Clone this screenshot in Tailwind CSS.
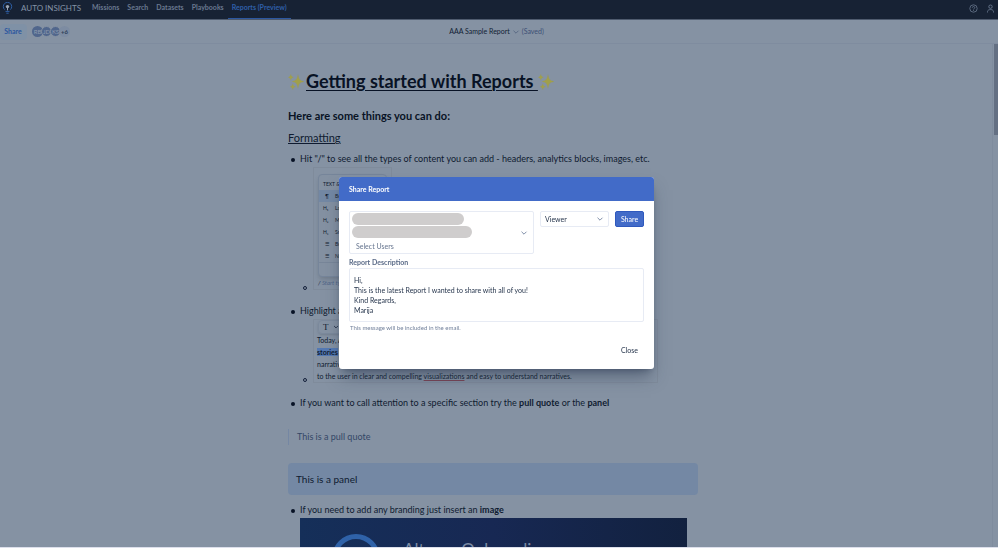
<!DOCTYPE html>
<html lang="en">
<head>
<meta charset="utf-8">
<meta name="viewport" content="width=device-width, initial-scale=1">
<title>AAA Sample Report - Auto Insights</title>
<script src="https://cdn.jsdelivr.net/npm/@tailwindcss/browser@4"></script>
</head>
<body class="flex h-screen flex-col overflow-hidden border-b border-[#dcdfeb] bg-[#8592a3] font-['Lato','Open_Sans',sans-serif] text-[7px] text-[#121e33]">

<svg class="hidden" aria-hidden="true">
  <symbol id="sparkles" viewBox="0 0 16 16">
    <path d="M10 .8C10.900 5.400 11.700 6.500 16 7.500 11.700 8.500 10.900 9.600 10 14.200 9.100 9.600 8.300 8.500 4 7.500 8.300 6.500 9.100 5.400 10 .8ZM2.800 .3C3.300 2.400 3.700 2.800 5.400 3.300 3.700 3.800 3.300 4.200 2.800 6.300 2.300 4.200 1.900 3.800.2 3.300 1.900 2.800 2.300 2.400 2.800.3ZM4.800 9.700C5.300 11.800 5.700 12.200 7.400 12.700 5.700 13.200 5.300 13.600 4.800 15.700 4.300 13.600 3.900 13.200 2.200 12.700 3.900 12.200 4.300 11.800 4.800 9.700Z" fill="#a09f4b" stroke="#a09f4b" stroke-width=".2"/>
  </symbol>
  <symbol id="chevron" viewBox="0 0 8 8">
    <path d="M1.800 3 4 5.200 6.200 3" fill="none" stroke="currentColor" stroke-width="1" stroke-linecap="round" stroke-linejoin="round"/>
  </symbol>
</svg>

<header class="flex h-5 shrink-0 items-stretch border-b border-[#4f5b6e] bg-[#172234] text-[#69788f]">
  <a href="#" class="flex items-center gap-2 pb-[3px] pl-[2px] text-[#8492a6]">
    <svg class="h-3 w-[11px]" viewBox="0 0 11 12" fill="none" aria-hidden="true">
      <path d="M2.600 7.600A4.200 4.200 0 1 1 8.400 7.600" stroke="#2d5fa5" stroke-width="1"/>
      <circle cx="5.500" cy="4.600" r="1.700" fill="#9aa6b6"/>
      <path d="M5.500 5v3.400" stroke="#9aa6b6" stroke-width="1"/>
      <path d="M3.500 9.400h4M4.300 11.200h2.400" stroke="#2d5fa5" stroke-width="1"/>
    </svg>
    <span class="text-[8px] leading-none">AUTO INSIGHTS</span>
  </a>
  <nav class="flex pl-[7px] font-bold">
    <a href="#" class="flex items-center px-1 pb-1">Missions</a>
    <a href="#" class="flex items-center px-1 pb-1">Search</a>
    <a href="#" class="flex items-center px-1 pb-1">Datasets</a>
    <a href="#" class="flex items-center px-1 pb-1">Playbooks</a>
    <a href="#" class="flex items-center border-b border-[#2c57a0] px-1 pb-[3px] text-[#2f5fa8]" aria-current="page">Reports (Preview)</a>
  </nav>
  <div class="ml-auto flex items-center gap-2 pr-[3px] pb-[3px]">
    <button type="button" aria-label="Help">
      <svg class="size-[9px]" viewBox="0 0 9 9" fill="none" stroke="currentColor" stroke-width=".8"><circle cx="4.500" cy="4.500" r="3.700"/><path d="M3.300 3.700c0-1.600 2.500-1.600 2.500 0 0 .9-1.300.8-1.300 1.800M4.500 6.200v.8"/></svg>
    </button>
    <button type="button" aria-label="Account">
      <svg class="size-[9px]" viewBox="0 0 9 9" fill="none" stroke="currentColor" stroke-width=".9"><circle cx="4.500" cy="2.700" r="1.700"/><path d="M1.500 8.500V7.600c0-2.700 6-2.700 6 0v.9"/></svg>
    </button>
  </div>
</header>

<div class="grid h-6 shrink-0 grid-cols-[1fr_auto_1fr] items-center border-b border-[#7f8c9f] pr-[5px]">
  <div class="flex items-center gap-[5px]">
    <button type="button" class="h-4 w-[27px] rounded-sm bg-[#7f91a6] pr-px font-bold text-[#2b569f]">Share</button>
    <div class="flex items-center text-[6px] text-[#8e9bae]">
      <span class="flex size-[11px] items-center justify-center rounded-full bg-[#50668c]">RB</span>
      <span class="-ml-[2px] flex size-[11px] items-center justify-center rounded-full border border-[#8592a3] bg-[#50668c]">JD</span>
      <span class="-ml-[2px] flex size-[11px] items-center justify-center rounded-full border border-[#8592a3] bg-[#50668c]">KS</span>
      <span class="-ml-[2px] flex size-[11px] items-center justify-center rounded-full bg-[#7d8ca2] font-bold text-[#2f3f5a]">+6</span>
    </div>
  </div>
  <div class="flex items-center gap-[2px]">
    <button type="button" class="flex items-center gap-[2px]">AAA Sample Report
      <svg class="size-2 text-[#5b6b85]" aria-hidden="true"><use href="#chevron"/></svg>
    </button>
    <span class="text-[#3d5075]">(Saved)</span>
  </div>
</div>

<div class="flex min-h-0 flex-1">
  <main class="min-w-0 flex-1 overflow-hidden border-r border-[#7f8c9e] pr-[6px]">
    <article class="mx-auto w-[410px] max-w-full pt-[25px] text-[9px] leading-4 text-[#0f1b30]">
      <h1 class="flex items-center text-[18px] leading-6 font-bold text-[#081225]">
        <svg class="mt-[2px] mr-[2px] size-4" role="img" aria-label="Sparkles"><use href="#sparkles"/></svg>
        <span class="whitespace-pre underline decoration-[1px] underline-offset-2">Getting started with Reports </span>
        <svg class="mt-[2px] size-4" role="img" aria-label="Sparkles"><use href="#sparkles"/></svg>
      </h1>
      <h2 class="mt-[15px] text-[11px] font-bold text-[#081225]">Here are some things you can do:</h2>
      <h3 class="mt-[6px] text-[11px] underline underline-offset-1">Formatting</h3>

      <ul class="mt-[5px] pl-3">
        <li class="before:float-left before:mt-[7px] before:-ml-[9px] before:size-1 before:rounded-full before:bg-[#081225] before:content-['']">Hit "/" to see all the types of content you can add - headers, analytics blocks, images, etc.
          <ul class="pl-[3px]">
            <li class="flex items-end gap-[6px] before:size-1 before:shrink-0 before:rounded-full before:border before:border-[#14203a] before:content-['']">
              <figure class="h-[123px] w-[79px] overflow-hidden border border-[#7f8b9b] px-1 pt-[6px] text-[5px] leading-3">
                <div class="h-[103px] overflow-hidden rounded-sm border border-[#76859a] bg-[#8491a2] pt-[3px] shadow-md">
                  <p class="truncate px-1">TEXT &amp; LAYOUT</p>
                  <p class="flex gap-1 bg-[#7388a4] px-1"><span class="w-2 text-center">¶</span>Body</p>
                  <p class="flex gap-1 px-1"><span class="w-2">H₁</span>Large</p>
                  <p class="flex gap-1 px-1"><span class="w-2">H₂</span>Medium</p>
                  <p class="flex gap-1 px-1"><span class="w-2">H₃</span>Small</p>
                  <p class="flex gap-1 px-1"><span class="w-2 text-center">☰</span>Bulleted</p>
                  <p class="flex gap-1 border-b border-[#788699] px-1"><span class="w-2 text-center">☰</span>Numbered</p>
                </div>
                <p class="text-[6px] text-[#4f6487] italic"><span class="text-[#14203a]">/</span> Start typing</p>
              </figure>
            </li>
          </ul>
        </li>
        <li class="mt-[13px] before:float-left before:mt-[7px] before:-ml-[9px] before:size-1 before:rounded-full before:bg-[#081225] before:content-['']">Highlight any text to format it
          <ul class="pl-[3px]">
            <li class="flex items-end gap-[6px] before:mb-px before:size-1 before:shrink-0 before:rounded-full before:border before:border-[#14203a] before:content-['']">
              <figure class="h-16 w-[345px] max-w-full overflow-hidden border border-[#7f8b9b] pl-[3px] text-[7px] leading-3">
                <p class="ml-px flex h-[14px] w-24 items-center gap-1 rounded-sm border border-[#7b899c] px-1 shadow-sm"><span class="font-['Liberation_Serif',serif] text-[9px]">T</span><svg class="size-[6px]" viewBox="0 0 8 8" aria-hidden="true"><use href="#chevron"/></svg></p>
                <p>Today, Auto Insights analyzes data and tells</p>
                <p><strong class="bg-[#5479b3]">stories</strong> with insights delivered as</p>
                <p>narratives automatically generated and explained</p>
                <p>to the user in clear and compelling <span class="underline decoration-[#7b4655]">visualizations</span> and easy to understand narratives.</p>
              </figure>
            </li>
          </ul>
        </li>
        <li class="mt-3 before:float-left before:mt-[7px] before:-ml-[9px] before:size-1 before:rounded-full before:bg-[#081225] before:content-['']">If you want to call attention to a specific section try the <strong>pull quote</strong> or the <strong>panel</strong></li>
      </ul>

      <blockquote class="mt-[18px] border-l border-[#7587a3] pl-2 text-[#344766]">This is a pull quote</blockquote>
      <aside class="mt-[18px] rounded-sm bg-[#7488a4] p-2 text-[10px]">This is a panel</aside>

      <ul class="mt-[7px] pl-3">
        <li class="before:float-left before:mt-[7px] before:-ml-[9px] before:size-1 before:rounded-full before:bg-[#081225] before:content-['']">If you need to add any branding just insert an <strong>image</strong>
          <figure class="mr-[11px] flex h-20 items-start gap-[23px] bg-linear-to-r from-[#152f59] via-[#172853] to-[#12213f] pt-4 pl-8 text-[#7c8ba4]">
            <svg class="size-12" viewBox="0 0 48 48" aria-hidden="true"><circle cx="24" cy="24" r="21.500" fill="none" stroke="#2f62a8" stroke-width="5"/></svg>
            <p class="mt-1 text-[17px] leading-6">Alteryx Onboarding</p>
          </figure>
        </li>
      </ul>
    </article>
  </main>
  <div class="w-[5px] shrink-0 pl-px"><div class="h-[91px] bg-[#647083]"></div></div>
</div>

<div class="fixed inset-0 flex items-center justify-center pr-[5px] pb-[2px]">
  <section role="dialog" aria-modal="true" aria-labelledby="dialog-title" class="w-[315px] overflow-hidden rounded-[3px] bg-white text-[#27364d] shadow-lg shadow-[#27364d]/50">
    <h2 id="dialog-title" class="flex h-6 items-center bg-[#426bc8] px-[10px] font-bold text-white">Share Report</h2>
    <form class="px-[10px] pt-[10px] pb-[11px]">
      <div class="flex items-start gap-[6px]">
        <div class="relative min-w-0 flex-1 rounded-xs border border-[#e7ebf4] px-[2px] pt-px">
          <div class="h-3 w-[112px] rounded-full bg-[#cfcdcd]"></div>
          <div class="mt-px h-3 w-[120px] rounded-full bg-[#cfcdcd]"></div>
          <input type="text" role="combobox" aria-expanded="false" aria-label="Select Users" placeholder="Select Users" class="mt-px block h-[14px] w-[120px] px-1 outline-none placeholder:text-[#66758f]">
          <svg class="absolute top-[17px] right-[5px] size-2 text-[#7f8ea8]" aria-hidden="true"><use href="#chevron"/></svg>
        </div>
        <div class="relative w-[69px]">
          <select aria-label="Role" class="block h-4 w-full appearance-none rounded-xs border border-[#e7ebf4] bg-white px-1">
            <option>Viewer</option>
            <option>Editor</option>
          </select>
          <svg class="pointer-events-none absolute top-1 right-[5px] size-2 text-[#7f8ea8]" aria-hidden="true"><use href="#chevron"/></svg>
        </div>
        <button type="button" class="h-4 w-[29px] rounded-xs border border-[#2f59bd] bg-[#426bc8] text-white">Share</button>
      </div>
      <label for="description" class="mt-[3px] block leading-[11px] font-bold text-[#5b6b88]">Report Description</label>
      <textarea id="description" class="block h-[54px] w-full resize-none overflow-hidden rounded-xs border border-[#e7ebf4] px-1 py-[6px] leading-[10px]">Hi,
This is the latest Report I wanted to share with all of you!
Kind Regards,
Marija</textarea>
      <p class="px-px text-[6px] leading-[11px] text-[#72819b]">This message will be included in the email.</p>
      <div class="mt-[9px] flex justify-end">
        <button type="button" class="h-4 px-[6px]">Close</button>
      </div>
    </form>
  </section>
</div>
</body>
</html>
